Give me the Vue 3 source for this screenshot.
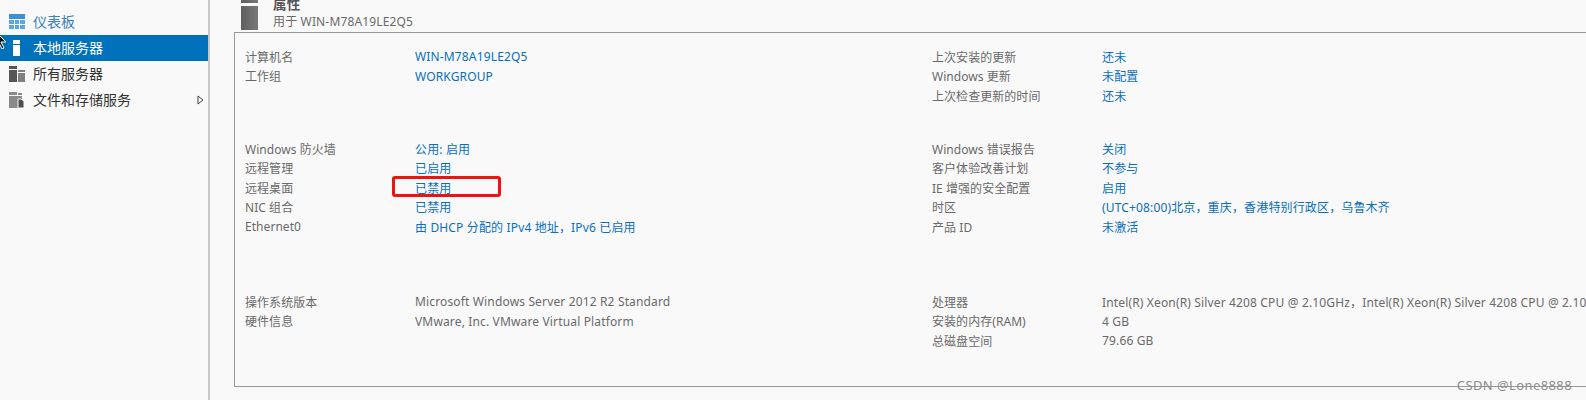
<template>
  <div class="page">
    <aside class="sidebar">
      <ul class="nav">
        <li v-for="n in nav" :key="n.label" class="nav-item" :class="n.cls">
          <svg class="nav-icon" width="16" height="16" viewBox="0 0 16 16">
            <template v-if="n.icon === 'dash'">
              <rect x="0" y="0" width="16" height="5" fill="#3d8fd6" />
              <rect x="0" y="6" width="5" height="4" fill="#5aa7e2" />
              <rect x="6" y="6" width="4" height="4" fill="#5aa7e2" />
              <rect x="11" y="6" width="5" height="4" fill="#5aa7e2" />
              <rect x="0" y="11" width="5" height="4" fill="#5aa7e2" />
              <rect x="6" y="11" width="4" height="4" fill="#5aa7e2" />
              <rect x="11" y="11" width="5" height="4" fill="#5aa7e2" />
            </template>
            <template v-else-if="n.icon === 'local'">
              <rect x="4" y="0" width="7" height="4" fill="#fff" />
              <rect x="4" y="5" width="7" height="11" fill="#fff" />
            </template>
            <template v-else-if="n.icon === 'all'">
              <rect x="0" y="0" width="8" height="3" fill="#555" />
              <rect x="0" y="4" width="8" height="12" fill="#555" />
              <rect x="9" y="4" width="7" height="2" fill="#808080" />
              <rect x="9" y="7" width="7" height="9" fill="#808080" />
            </template>
            <template v-else>
              <rect x="0" y="0" width="8" height="3" fill="#8a8a8a" />
              <rect x="9" y="1" width="4" height="2" fill="#8a8a8a" />
              <rect x="0" y="4" width="13" height="12" fill="#8a8a8a" />
              <path d="M9 7h3l3 2v7H9z" fill="#4d4d4d" stroke="#f9f9f9" />
            </template>
          </svg>
          <span class="nav-label">{{ n.label }}</span>
          <svg v-if="n.arrow" class="nav-arrow" width="7" height="10" viewBox="0 0 7 10">
            <path d="M1 1l5 4-5 4z" fill="none" stroke="#444" />
          </svg>
        </li>
      </ul>
      <svg class="cursor" width="8" height="18" viewBox="0 0 8 18">
        <path d="M-4 1l10 10H1l3 6-2 1-3-6-3 3z" fill="#111" stroke="#fff" />
      </svg>
    </aside>

    <main class="content">
      <header class="head">
        <svg class="head-icon" width="17" height="30" viewBox="0 0 17 30">
          <defs>
            <linearGradient id="srv" x1="0" x2="1" y1="0" y2="0">
              <stop offset="0" stop-color="#5f5f5f" />
              <stop offset="1" stop-color="#787878" />
            </linearGradient>
          </defs>
          <rect width="17" height="3" fill="url(#srv)" />
          <rect y="6" width="17" height="24" fill="url(#srv)" />
        </svg>
        <div class="head-text">
          <div class="head-title">属性</div>
          <div class="head-sub">用于 WIN-M78A19LE2Q5</div>
        </div>
        <div class="task-btn">任务</div>
      </header>

      <section class="panel">
        <div v-for="(g, i) in groups" :key="i" class="group" :class="'group-' + i">
          <div v-for="(col, c) in g" :key="c" class="col">
            <div v-for="r in col" :key="r[0]" class="row">
              <span class="key">{{ r[0] }}</span>
              <span class="val" :class="{ plain: i === 2 }">
                {{ r[1] }}
                <i v-if="r[0] === '远程桌面'" class="mark"></i>
              </span>
            </div>
          </div>
        </div>
      </section>
    </main>
    <div class="watermark">CSDN @Lone8888</div>
  </div>
</template>

<script setup>
const nav = [
  { label: "仪表板", icon: "dash", cls: "link" },
  { label: "本地服务器", icon: "local", cls: "active" },
  { label: "所有服务器", icon: "all" },
  { label: "文件和存储服务", icon: "files", arrow: true },
];

const groups = [
  [
    [
      ["计算机名", "WIN-M78A19LE2Q5"],
      ["工作组", "WORKGROUP"],
    ],
    [
      ["上次安装的更新", "还未"],
      ["Windows 更新", "未配置"],
      ["上次检查更新的时间", "还未"],
    ],
  ],
  [
    [
      ["Windows 防火墙", "公用: 启用"],
      ["远程管理", "已启用"],
      ["远程桌面", "已禁用"],
      ["NIC 组合", "已禁用"],
      ["Ethernet0", "由 DHCP 分配的 IPv4 地址，IPv6 已启用"],
    ],
    [
      ["Windows 错误报告", "关闭"],
      ["客户体验改善计划", "不参与"],
      ["IE 增强的安全配置", "启用"],
      ["时区", "(UTC+08:00)北京，重庆，香港特别行政区，乌鲁木齐"],
      ["产品 ID", "未激活"],
    ],
  ],
  [
    [
      ["操作系统版本", "Microsoft Windows Server 2012 R2 Standard"],
      ["硬件信息", "VMware, Inc. VMware Virtual Platform"],
    ],
    [
      ["处理器", "Intel(R) Xeon(R) Silver 4208 CPU @ 2.10GHz，Intel(R) Xeon(R) Silver 4208 CPU @ 2.10GHz"],
      ["安装的内存(RAM)", "4 GB"],
      ["总磁盘空间", "79.66 GB"],
    ],
  ],
];
</script>

<style>
html,
body {
  margin: 0;
  overflow: hidden;
}
</style>

<style scoped>
.page {
  position: relative;
  display: flex;
  width: 1586px;
  height: 400px;
  overflow: hidden;
  background: #f9f9f9;
  font-family: "Noto Sans", "Noto Sans CJK SC", sans-serif;
  font-size: 12px;
  letter-spacing: 0.15px;
  color: #6a6a6a;
}
.sidebar {
  position: relative;
  flex: none;
  width: 208px;
  padding-top: 9px;
  border-right: 2px solid #c8c8c8;
}
.nav {
  list-style: none;
  margin: 0;
  padding: 0;
  font-size: 14px;
  letter-spacing: 0;
  color: #333;
}
.nav-item {
  display: flex;
  align-items: center;
  height: 26px;
  padding-left: 9px;
}
.nav-item.link {
  color: #3a7fc0;
}
.nav-item.active {
  background: #0072bc;
  color: #fff;
}
.nav-icon {
  flex: none;
}
.nav-label {
  margin-left: 8px;
  margin-bottom: 3px;
}
.nav-arrow {
  margin-left: auto;
  margin-right: 4px;
}
.cursor {
  position: absolute;
  left: 0;
  top: 31px;
}
.content {
  flex: none;
  width: 1376px;
  padding-left: 24px;
}
.head {
  display: flex;
  height: 32px;
  padding-left: 7px;
}
.head-text {
  margin-left: 15px;
  margin-top: -4px;
  white-space: nowrap;
}
.head-title {
  font-size: 13.5px;
  font-weight: 700;
  line-height: 17px;
  color: #555;
}
.head-sub {
  line-height: 18px;
}
.task-btn {
  margin-left: auto;
  align-self: flex-start;
  box-sizing: border-box;
  width: 40px;
  height: 17px;
  margin-top: 12px;
  margin-right: -38px;
  padding-left: 8px;
  border: 1px solid #a0a0a0;
  line-height: 15px;
  color: #222;
}
.panel {
  box-sizing: border-box;
  height: 355px;
  margin-right: -30px;
  padding: 14px 0 0 10px;
  border: 1px solid #999;
  border-right: 0;
}
.group {
  display: grid;
  grid-template-columns: 687px 1fr;
  height: 92px;
}
.group-1 {
  height: 153px;
}
.row {
  display: flex;
  align-items: center;
  height: 19.5px;
  white-space: nowrap;
}
.key {
  flex: none;
  width: 170px;
  letter-spacing: 0.05px;
}
.val {
  position: relative;
  color: #0a6fbe;
}
.val.plain {
  color: #6a6a6a;
}
.mark {
  position: absolute;
  left: -23px;
  top: -3px;
  width: 103px;
  height: 15px;
  border: 3px solid #f31010;
  border-radius: 3px;
}
.watermark {
  position: absolute;
  right: 14px;
  bottom: 6px;
  font-size: 13px;
  letter-spacing: 0.4px;
  color: #8c8c8c;
}
</style>
